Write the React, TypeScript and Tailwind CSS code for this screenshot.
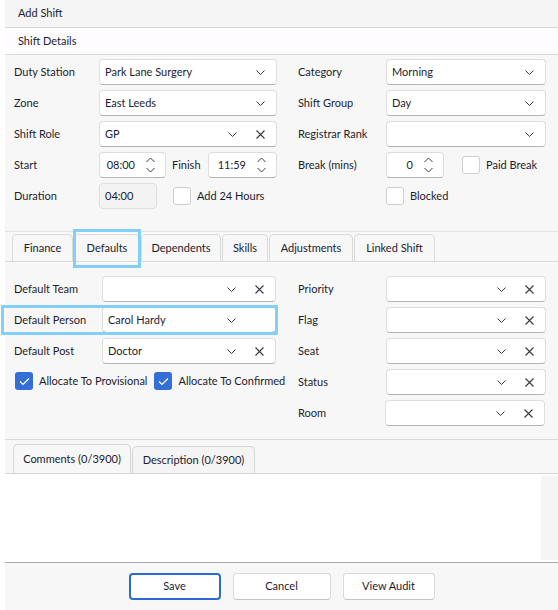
import type { ReactNode } from "react";

const Chevron = () => (
  <svg width="9" height="5" viewBox="0 0 9 5" className="shrink-0">
    <polyline points="0.5,0.5 4.5,4.5 8.5,0.5" fill="none" stroke="#3a3a44" strokeWidth="1" />
  </svg>
);

const Cross = () => (
  <svg width="9" height="9" viewBox="0 0 9 9" className="shrink-0">
    <path d="M0.5 0.5 L8.5 8.5 M8.5 0.5 L0.5 8.5" fill="none" stroke="#3a3a44" strokeWidth="1.1" />
  </svg>
);

const Spinner = () => (
  <svg width="9" height="16" viewBox="0 0 9 16" className="shrink-0">
    <polyline points="0.5,5 4.5,1 8.5,5" fill="none" stroke="#3a3a44" strokeWidth="1" />
    <polyline points="0.5,11 4.5,15 8.5,11" fill="none" stroke="#3a3a44" strokeWidth="1" />
  </svg>
);

type SelectProps = {
  value?: string;
  clear?: boolean;
  width: string;
  focused?: boolean;
};

function Select({ value, clear, width, focused }: SelectProps) {
  return (
    <div
      className={`${width} h-[26px] shrink-0 bg-white border rounded-[4px] flex items-center pl-[5px] pr-[11px] ${
        focused ? "border-[#dcdcdc] border-b-[#2a4aa3]" : "border-[#dedede] border-b-[#b4b4b4]"
      }`}
    >
      <span className="flex-1 truncate">{value}</span>
      <Chevron />
      {clear && <span className="ml-[19px] flex"><Cross /></span>}
      {focused && <span className="ml-[19px] w-[9px] shrink-0" />}
    </div>
  );
}

function Spin({ value, width }: { value: string; width: string }) {
  return (
    <div
      className={`${width} h-[26px] shrink-0 bg-white border border-[#dedede] border-b-[#b4b4b4] rounded-[4px] flex items-center justify-end pr-[10px]`}
    >
      <span className="mr-[11px]">{value}</span>
      <Spinner />
    </div>
  );
}

function Check({ checked }: { checked?: boolean }) {
  return checked ? (
    <span className="w-[18px] h-[18px] shrink-0 rounded-[3px] bg-[#346fd6] flex items-center justify-center">
      <svg width="11" height="9" viewBox="0 0 11 9">
        <polyline points="1,4.5 4,7.5 10,1.5" fill="none" stroke="white" strokeWidth="1.2" />
      </svg>
    </span>
  ) : (
    <span className="w-[18px] h-[18px] shrink-0 rounded-[3px] bg-white border border-[#cfcfcf]" />
  );
}

function Row({ label, labelW, children }: { label?: string; labelW: string; children: ReactNode }) {
  return (
    <div className="h-[26px] flex items-center">
      <span className={`${labelW} shrink-0`}>{label}</span>
      {children}
    </div>
  );
}

const tabs = [
  { name: "Finance", w: "w-[61px]" },
  { name: "Defaults", w: "w-[66px]", active: true },
  { name: "Dependents", w: "w-[80px]" },
  { name: "Skills", w: "w-[46px]" },
  { name: "Adjustments", w: "w-[84px]" },
  { name: "Linked Shift", w: "w-[81px]" },
];

export default function App() {
  return (
    <div
      className="w-[558px] h-[610px] bg-white pl-[5px] text-[11px] text-[#1c1c2e] overflow-hidden"
      style={{ fontFamily: 'Lato, "Noto Sans", sans-serif' }}
    >
      <div className="h-full bg-[#f7f7f7] flex flex-col">
        <div className="h-[28px] shrink-0 border-b border-[#d8d8d8] bg-[#f5f5f5] flex items-center pl-[13px]">
          Add Shift
        </div>
        <div className="h-[27px] shrink-0 border-b border-[#dadada] bg-[#fefcff] flex items-center pl-[13px]">
          Shift Details
        </div>

        {/* shift details */}
        <div className="h-[177px] shrink-0 border-b border-[#e2e2e2] pt-[4px] px-[9px] flex gap-[21px]">
          <div className="w-[263px] flex flex-col gap-[5px]">
            <Row label="Duty Station" labelW="w-[85px]">
              <Select value="Park Lane Surgery" width="w-[178px]" />
            </Row>
            <Row label="Zone" labelW="w-[85px]">
              <Select value="East Leeds" width="w-[178px]" />
            </Row>
            <Row label="Shift Role" labelW="w-[85px]">
              <Select value="GP" clear width="w-[178px]" />
            </Row>
            <Row label="Start" labelW="w-[85px]">
              <Spin value="08:00" width="w-[67px]" />
              <span className="w-[36px] shrink-0 ml-[6px]">Finish</span>
              <Spin value="11:59" width="w-[69px]" />
            </Row>
            <Row label="Duration" labelW="w-[85px]">
              <div className="w-[58px] h-[26px] shrink-0 rounded-[4px] border border-[#e0e0e0] bg-[#f3f3f3] flex items-center pl-[5px]">
                04:00
              </div>
              <span className="ml-[16px] flex items-center gap-[6px]">
                <Check />
                Add 24 Hours
              </span>
            </Row>
          </div>
          <div className="w-[248px] flex flex-col gap-[5px]">
            <Row label="Category" labelW="w-[88px]">
              <Select value="Morning" width="w-[160px]" />
            </Row>
            <Row label="Shift Group" labelW="w-[88px]">
              <Select value="Day" width="w-[160px]" />
            </Row>
            <Row label="Registrar Rank" labelW="w-[88px]">
              <Select width="w-[160px]" />
            </Row>
            <Row label="Break (mins)" labelW="w-[88px]">
              <Spin value="0" width="w-[58px]" />
              <span className="ml-[18px] flex items-center gap-[6px]">
                <Check />
                Paid Break
              </span>
            </Row>
            <Row labelW="w-[88px]">
              <span className="flex items-center gap-[6px]">
                <Check />
                Blocked
              </span>
            </Row>
          </div>
        </div>

        {/* tab strip */}
        <div className="h-[30px] shrink-0 border-b border-[#dadada] pt-[2px] pl-[7px] flex items-end gap-px">
          {tabs.map((t) => (
            <div
              key={t.name}
              className={`${t.w} relative h-[27px] shrink-0 rounded-t-[5px] border border-b-0 border-[#dadada] bg-[#f7f7f7] flex justify-center ${
                t.active ? "items-start pt-[5px]" : "items-center"
              }`}
            >
              {t.name}
              {t.active && (
                <span className="absolute left-[-2px] right-[-2px] top-[-6px] bottom-[-7px] border-[3px] border-[#84cff6] pointer-events-none" />
              )}
            </div>
          ))}
        </div>

        {/* defaults */}
        <div className="h-[178px] shrink-0 border-b border-[#dadada] pt-[14px] px-[9px] flex gap-[21px]">
          <div className="w-[263px] flex flex-col gap-[5px]">
            <Row label="Default Team" labelW="w-[88px]">
              <Select clear width="w-[174px]" />
            </Row>
            <div className="relative">
              <Row label="Default Person" labelW="w-[88px]">
                <Select value="Carol Hardy" focused width="w-[174px]" />
              </Row>
              <span className="absolute left-[-13px] right-[-1px] top-[-2px] bottom-[-2px] border-[3px] border-[#84cff6] pointer-events-none" />
            </div>
            <Row label="Default Post" labelW="w-[88px]">
              <Select value="Doctor" clear width="w-[174px]" />
            </Row>
            <div className="mt-[3px] pl-px flex items-center whitespace-nowrap">
              <Check checked />
              <span className="ml-[6px]">Allocate To Provisional</span>
              <span className="ml-[7px]"><Check checked /></span>
              <span className="ml-[6px]">Allocate To Confirmed</span>
            </div>
          </div>
          <div className="w-[248px] flex flex-col gap-[5px]">
            <Row label="Priority" labelW="w-[88px]">
              <Select clear width="w-[160px]" />
            </Row>
            <Row label="Flag" labelW="w-[88px]">
              <Select clear width="w-[160px]" />
            </Row>
            <Row label="Seat" labelW="w-[88px]">
              <Select clear width="w-[160px]" />
            </Row>
            <Row label="Status" labelW="w-[88px]">
              <Select clear width="w-[160px]" />
            </Row>
            <Row label="Room" labelW="w-[87px]">
              <Select clear width="w-[160px]" />
            </Row>
          </div>
        </div>

        {/* comments tabs */}
        <div className="h-[34px] shrink-0 border-b border-[#d6d6d6] pl-[8px] flex items-end gap-px">
          <div className="w-[118px] h-[29px] shrink-0 rounded-t-[5px] border border-b-0 border-[#d6d6d6] bg-[#f7f7f7] flex items-center justify-center">
            Comments (0/3900)
          </div>
          <div className="w-[123px] h-[27px] shrink-0 rounded-t-[5px] border border-b-0 border-[#d6d6d6] bg-[#f4f4f4] flex items-center justify-center">
            Description (0/3900)
          </div>
        </div>

        <div className="h-[89px] shrink-0 border-b border-[#a8a8a8] bg-white flex">
          <div className="flex-1" />
          <div className="w-[17px] my-[2px] bg-[#f5f5f5]" />
        </div>

        {/* footer */}
        <div className="flex-1 pt-[10px] flex justify-center gap-[12px]">
          <button className="w-[92px] h-[27px] rounded-[4px] border-2 border-[#2d6ad0] bg-white">Save</button>
          <button className="w-[98px] h-[27px] rounded-[4px] border border-[#dadada] border-b-[#c4c4c4] bg-white">
            Cancel
          </button>
          <button className="w-[92px] h-[27px] rounded-[4px] border border-[#dadada] border-b-[#c4c4c4] bg-white">
            View Audit
          </button>
        </div>
      </div>
    </div>
  );
}
